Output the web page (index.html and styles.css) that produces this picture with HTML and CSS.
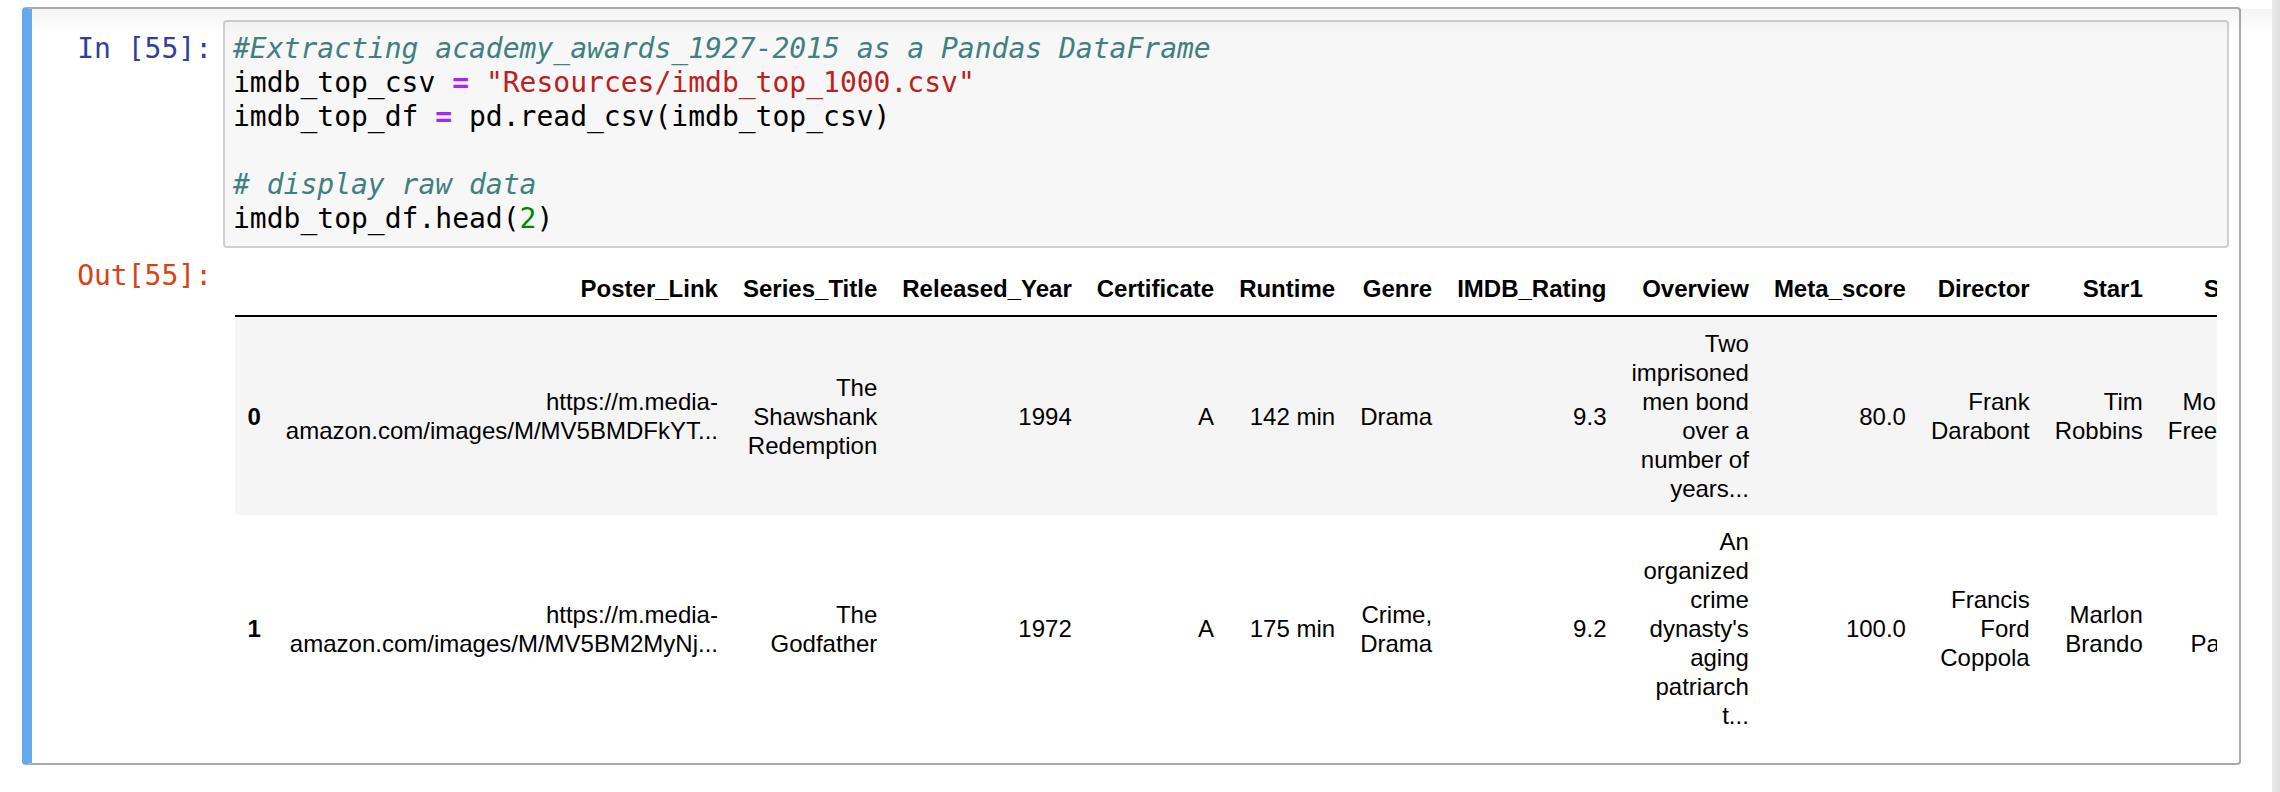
FILE: index.html
```html
<!DOCTYPE html>
<html lang="en">
<head>
<meta charset="utf-8">
<title>Notebook cell</title>
<link rel="stylesheet" href="styles.css">
</head>
<body>
<div class="page">
  <div class="nb">
    <div class="cell">
      <div class="row">
        <div class="prompt in">In&nbsp;[55]:</div>
        <div class="code"><pre><span class="cm">#Extracting academy_awards_1927-2015 as a Pandas DataFrame</span>
imdb_top_csv <span class="op">=</span> <span class="st">"Resources/imdb_top_1000.csv"</span>
imdb_top_df <span class="op">=</span> pd.read_csv(imdb_top_csv)

<span class="cm"># display raw data</span>
imdb_top_df.head(<span class="nu">2</span>)</pre></div>
      </div>
      <div class="row">
        <div class="prompt out">Out[55]:</div>
        <div class="out-body">
          <table class="df">
            <thead>
              <tr>
                <th></th>
                <th>Poster_Link</th>
                <th>Series_Title</th>
                <th>Released_Year</th>
                <th>Certificate</th>
                <th>Runtime</th>
                <th>Genre</th>
                <th>IMDB_Rating</th>
                <th>Overview</th>
                <th>Meta_score</th>
                <th>Director</th>
                <th>Star1</th>
                <th>Star2</th>
                <th>Star3</th>
                <th>Star4</th>
                <th>No_of_Votes</th>
                <th>Gross</th>
              </tr>
            </thead>
            <tbody>
              <tr>
                <th>0</th>
                <td>https://m.media-amazon.com/images/M/MV5BMDFkYT...</td>
                <td>The Shawshank Redemption</td>
                <td>1994</td>
                <td>A</td>
                <td>142 min</td>
                <td>Drama</td>
                <td>9.3</td>
                <td>Two imprisoned men bond over a number of years...</td>
                <td>80.0</td>
                <td>Frank Darabont</td>
                <td>Tim Robbins</td>
                <td>Morgan Freeman</td>
                <td>Bob Gunton</td>
                <td>William Sadler</td>
                <td>2343110</td>
                <td>28,341,469</td>
              </tr>
              <tr>
                <th>1</th>
                <td>https://m.media-amazon.com/images/M/MV5BM2MyNj...</td>
                <td>The Godfather</td>
                <td>1972</td>
                <td>A</td>
                <td>175 min</td>
                <td>Crime, Drama</td>
                <td>9.2</td>
                <td>An organized crime dynasty's aging patriarch t...</td>
                <td>100.0</td>
                <td>Francis Ford Coppola</td>
                <td>Marlon Brando</td>
                <td>Al Pacino</td>
                <td>James Caan</td>
                <td>Diane Keaton</td>
                <td>1620367</td>
                <td>134,966,411</td>
              </tr>
            </tbody>
          </table>
        </div>
      </div>
    </div>
    <div class="shade"></div>
  </div>
  <div class="edge"></div>
</div>
</body>
</html>
```

FILE: styles.css
```css
html, body {
  margin: 0;
  padding: 0;
  background: #ffffff;
}

.page {
  display: flex;
  height: 792px;
  overflow: hidden;
}

.nb {
  flex: 1;
  min-width: 0;
  position: relative;
  padding: 7px 31px 0 22px;
}

.edge {
  width: 8px;
  background: linear-gradient(to right, #ececec, #dedede);
}

.shade {
  position: absolute;
  top: 9px;
  left: 32px;
  right: 0;
  height: 26px;
  background: linear-gradient(to bottom, rgba(0, 0, 0, 0.045), rgba(0, 0, 0, 0));
  pointer-events: none;
}

.cell {
  border: 2px solid #ababab;
  border-left: 10px solid #64a8ee;
  border-radius: 4px;
  padding: 11px 10px 10px 10px;
}

.row {
  display: flex;
  align-items: flex-start;
}

.prompt {
  width: 181px;
  flex: none;
  box-sizing: border-box;
  padding-right: 11px;
  text-align: right;
  font-family: "DejaVu Sans Mono", monospace;
  font-size: 28px;
  line-height: 34px;
  white-space: nowrap;
}

.prompt.in {
  color: #303f9f;
  padding-top: 12px;
}

.prompt.out {
  color: #d84315;
  padding-top: 11px;
}

.code {
  flex: 1;
  min-width: 0;
  border: 2px solid #cfcfcf;
  border-radius: 4px;
  background: #f7f7f7;
  padding: 10px 8px;
}

.code pre {
  margin: 0;
  font-family: "DejaVu Sans Mono", monospace;
  font-size: 28px;
  line-height: 34px;
  color: #000000;
}

.cm {
  color: #408080;
  font-style: italic;
}

.op {
  color: #aa22ff;
  font-weight: bold;
}

.st {
  color: #ba2121;
}

.nu {
  color: #008800;
}

.out-body {
  flex: 1;
  min-width: 0;
  overflow: hidden;
  margin-right: 12px;
  padding: 14px 0 11px 12px;
}

.df {
  border-collapse: collapse;
  border-spacing: 0;
  font-family: "Liberation Sans", Arial, Helvetica, sans-serif;
  font-size: 24px;
  line-height: 29px;
  color: #000000;
}

.df th,
.df td {
  padding: 12px 12.5px;
  text-align: right;
  vertical-align: middle;
  white-space: normal;
}

.df thead th {
  vertical-align: bottom;
  border-bottom: 2px solid #000000;
  font-weight: bold;
}

.df tbody th {
  font-weight: bold;
}

.df tbody tr:nth-child(odd) {
  background: #f5f5f5;
}
```
